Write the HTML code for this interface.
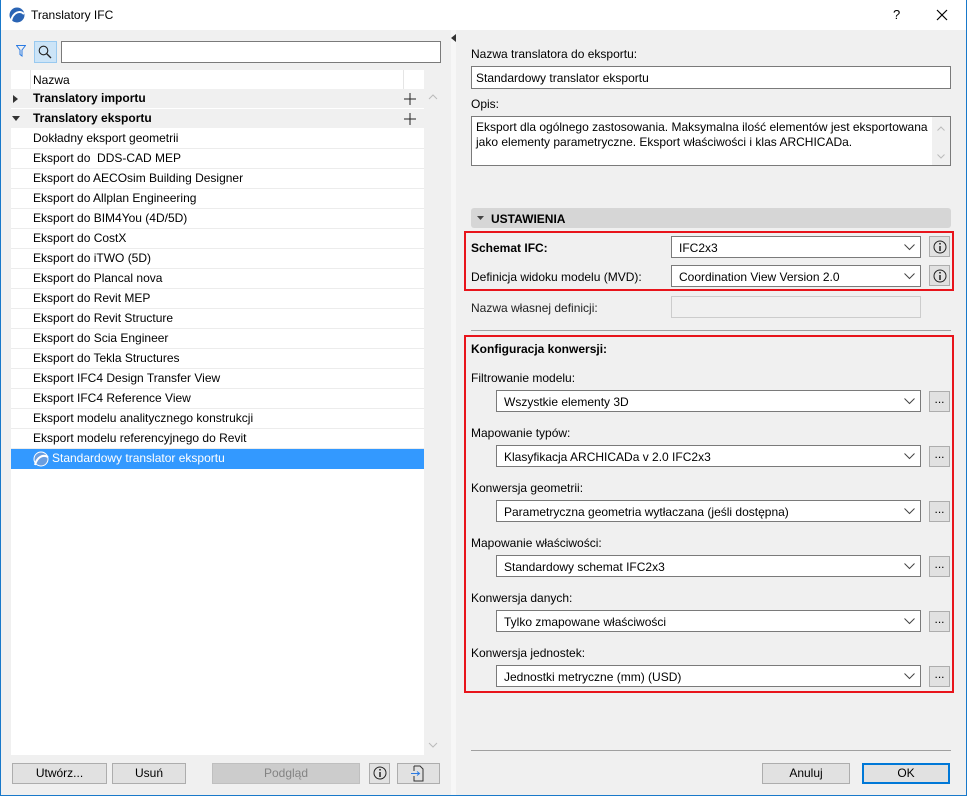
<!DOCTYPE html>
<html><head><meta charset="utf-8"><style>
*{box-sizing:border-box;margin:0;padding:0}
body{width:967px;height:796px;overflow:hidden;background:#f0f0f0;font-family:"Liberation Sans",sans-serif;font-size:12px;color:#000;position:relative}
.a{position:absolute}
.win{position:absolute;left:0;top:0;width:967px;height:796px;border:1px solid #1979ca;border-top:none}
.title{left:1px;top:0;width:965px;height:30px;background:#fff}
.inp{position:absolute;background:#fff;border:1px solid #7a7a7a}
.dd{position:absolute;background:#fff;border:1px solid #7a7a7a;height:22px;padding:4px 0 0 7px;white-space:nowrap}
.dd svg{position:absolute;right:5px;top:7px}
.btn{position:absolute;background:#e1e1e1;border:1px solid #adadad;height:21px;text-align:center;line-height:19px}
.row{position:absolute;left:11px;width:413px;height:20px;line-height:19px;padding-left:22px;border-bottom:1px solid #ececec;background:#fff;white-space:nowrap}
.lbl{position:absolute;white-space:nowrap}
.info{position:absolute;width:21px;height:21px;background:#e1e1e1;border:1px solid #adadad}
.red{position:absolute;border:2px solid #e8141b}
</style></head><body>
<div class="a title"></div>
<svg class="a" style="left:9px;top:7px" width="16" height="16" viewBox="0 0 16 16"><circle cx="8" cy="8" r="7.5" fill="#2a64b4"/><path d="M2 14 C4 5 11 3 15 7" stroke="#fff" stroke-width="2" fill="none"/></svg>
<div class="lbl" style="left:31px;top:8px;font-size:12px">Translatory IFC</div>
<div class="lbl" style="left:893px;top:7px;font-size:13px">?</div>
<svg class="a" style="left:936px;top:9px" width="12" height="12"><path d="M1 1L11 11M11 1L1 11" stroke="#000" stroke-width="1.2"/></svg>

<!-- left pane -->
<svg class="a" style="left:16px;top:45px" width="10" height="12"><path d="M0.5 0.5H9.5L6 5V11L4 9.5V5Z" fill="none" stroke="#2a7ae2"/></svg>
<div class="a" style="left:34px;top:41px;width:23px;height:22px;background:#cce4f7;border:1px solid #99c9ef"></div>
<svg class="a" style="left:38px;top:45px" width="14" height="14"><circle cx="5.5" cy="5.5" r="4.3" fill="none" stroke="#222" stroke-width="1.1"/><path d="M8.5 8.5L13 13" stroke="#222" stroke-width="1.3"/></svg>
<div class="inp" style="left:61px;top:41px;width:380px;height:22px"></div>
<div class="a" style="left:11px;top:70px;width:413px;height:19px;background:#fff"></div>
<div class="a" style="left:30px;top:70px;width:1px;height:19px;background:#e5e5e5"></div>
<div class="a" style="left:403px;top:70px;width:1px;height:19px;background:#e5e5e5"></div>
<div class="lbl" style="left:33px;top:73px">Nazwa</div>
<div class="row" style="top:89px;background:#f0f0f0;font-weight:bold;border-color:#fff">Translatory importu</div>
<svg class="a" style="left:13px;top:95px" width="6" height="8"><path d="M0 0L5 4L0 8Z" fill="#333"/></svg>
<svg class="a" style="left:404px;top:93px" width="12" height="12"><path d="M6 0V12M0 6H12" stroke="#222"/></svg>
<div class="row" style="top:109px;background:#f0f0f0;font-weight:bold;border-color:#fff">Translatory eksportu</div>
<svg class="a" style="left:12px;top:116px" width="8" height="6"><path d="M0 0L8 0L4 5Z" fill="#333"/></svg>
<svg class="a" style="left:404px;top:113px" width="12" height="12"><path d="M6 0V12M0 6H12" stroke="#222"/></svg>
<div class="row" style="top:129px">Dokładny eksport geometrii</div>
<div class="row" style="top:149px">Eksport do&nbsp; DDS-CAD MEP</div>
<div class="row" style="top:169px">Eksport do AECOsim Building Designer</div>
<div class="row" style="top:189px">Eksport do Allplan Engineering</div>
<div class="row" style="top:209px">Eksport do BIM4You (4D/5D)</div>
<div class="row" style="top:229px">Eksport do CostX</div>
<div class="row" style="top:249px">Eksport do iTWO (5D)</div>
<div class="row" style="top:269px">Eksport do Plancal nova</div>
<div class="row" style="top:289px">Eksport do Revit MEP</div>
<div class="row" style="top:309px">Eksport do Revit Structure</div>
<div class="row" style="top:329px">Eksport do Scia Engineer</div>
<div class="row" style="top:349px">Eksport do Tekla Structures</div>
<div class="row" style="top:369px">Eksport IFC4 Design Transfer View</div>
<div class="row" style="top:389px">Eksport IFC4 Reference View</div>
<div class="row" style="top:409px">Eksport modelu analitycznego konstrukcji</div>
<div class="row" style="top:429px">Eksport modelu referencyjnego do Revit</div>
<div class="row" style="top:449px;background:#3399ff;color:#fff;padding-left:41px;border:none">Standardowy translator eksportu</div>
<svg class="a" style="left:33px;top:451px" width="16" height="16"><circle cx="8" cy="8" r="7" fill="#6a9ee0" stroke="#fff"/><path d="M2 14C4 6 10 3 15 6" stroke="#fff" stroke-width="2" fill="none"/></svg>
<div class="a" style="left:11px;top:469px;width:413px;height:286px;background:#fff"></div>
<svg class="a" style="left:428px;top:94px" width="10" height="6"><path d="M1 5L5 1L9 5" stroke="#bbb" fill="none"/></svg>
<svg class="a" style="left:428px;top:742px" width="10" height="6"><path d="M1 1L5 5L9 1" stroke="#bbb" fill="none"/></svg>
<div class="btn" style="left:12px;top:763px;width:95px">Utwórz...</div>
<div class="btn" style="left:112px;top:763px;width:74px">Usuń</div>
<div class="btn" style="left:212px;top:763px;width:148px;background:#cccccc;border-color:#bfbfbf;color:#838383">Podgląd</div>
<div class="btn" style="left:369px;top:763px;width:21px"></div>
<svg class="a" style="left:373px;top:766px" width="14" height="14"><circle cx="7" cy="7" r="6" fill="none" stroke="#222"/><path d="M7 6V11" stroke="#222" stroke-width="1.5"/><circle cx="7" cy="3.8" r="0.9" fill="#222"/></svg>
<div class="btn" style="left:397px;top:763px;width:43px"></div>
<svg class="a" style="left:410px;top:765px" width="16" height="17"><path d="M4 1H10L13 4V16H4V11M4 6V1" fill="none" stroke="#333"/><path d="M1 8.5H9M7 6.5L9.5 8.5L7 10.5" stroke="#2a7ae2" fill="none"/></svg>

<!-- splitter -->
<div class="a" style="left:451px;top:30px;width:5px;height:765px;background:#f7f7f7"></div>
<svg class="a" style="left:451px;top:34px" width="5" height="8"><path d="M5 0V8L0 4Z" fill="#333"/></svg>

<!-- right pane -->
<div class="lbl" style="left:471px;top:47px">Nazwa translatora do eksportu:</div>
<div class="inp" style="left:471px;top:66px;width:480px;height:23px;padding:4px 0 0 4px">Standardowy translator eksportu</div>
<div class="lbl" style="left:471px;top:97px">Opis:</div>
<div class="inp" style="left:471px;top:116px;width:480px;height:50px;padding:3px 22px 0 4px;line-height:15px">Eksport dla ogólnego zastosowania. Maksymalna ilość elementów jest eksportowana jako elementy parametryczne. Eksport właściwości i klas ARCHICADa.</div>
<div class="a" style="left:932px;top:117px;width:18px;height:48px;background:#f0f0f0"></div>
<svg class="a" style="left:937px;top:126px" width="8" height="5"><path d="M0.5 4.5L4 1L7.5 4.5" stroke="#bbb" fill="none"/></svg>
<svg class="a" style="left:937px;top:154px" width="8" height="5"><path d="M0.5 0.5L4 4L7.5 0.5" stroke="#bbb" fill="none"/></svg>

<div class="a" style="left:471px;top:208px;width:480px;height:20px;background:#d6d6d6;border-radius:3px"></div>
<svg class="a" style="left:477px;top:216px" width="7" height="5"><path d="M0 0H7L3.5 4Z" fill="#444"/></svg>
<div class="lbl" style="left:491px;top:212px;font-weight:bold">USTAWIENIA</div>

<div class="red" style="left:464px;top:231px;width:490px;height:60px"></div>
<div class="lbl" style="left:471px;top:241px;font-weight:bold">Schemat IFC:</div>
<div class="dd" style="left:671px;top:236px;width:250px">IFC2x3<svg width="11" height="7"><path d="M0.5 0.5L5.5 5.5L10.5 0.5" stroke="#444" fill="none"/></svg></div>
<div class="info" style="left:929px;top:236px"></div>
<svg class="a" style="left:933px;top:240px" width="14" height="14"><circle cx="7" cy="7" r="6" fill="none" stroke="#222"/><path d="M7 6V11" stroke="#222" stroke-width="1.5"/><circle cx="7" cy="3.8" r="0.9" fill="#222"/></svg>
<div class="lbl" style="left:471px;top:270px">Definicja widoku modelu (MVD):</div>
<div class="dd" style="left:671px;top:265px;width:250px">Coordination View Version 2.0<svg width="11" height="7"><path d="M0.5 0.5L5.5 5.5L10.5 0.5" stroke="#444" fill="none"/></svg></div>
<div class="info" style="left:929px;top:265px"></div>
<svg class="a" style="left:933px;top:269px" width="14" height="14"><circle cx="7" cy="7" r="6" fill="none" stroke="#222"/><path d="M7 6V11" stroke="#222" stroke-width="1.5"/><circle cx="7" cy="3.8" r="0.9" fill="#222"/></svg>
<div class="lbl" style="left:471px;top:301px;color:#222">Nazwa własnej definicji:</div>
<div class="a" style="left:671px;top:296px;width:250px;height:22px;background:#f0f0f0;border:1px solid #ccc"></div>
<div class="a" style="left:471px;top:330px;width:480px;height:1px;background:#a0a0a0"></div>

<div class="red" style="left:464px;top:335px;width:490px;height:358px"></div>
<div class="lbl" style="left:471px;top:342px;font-weight:bold">Konfiguracja konwersji:</div>

<div class="lbl" style="left:471px;top:371px">Filtrowanie modelu:</div>
<div class="dd" style="left:496px;top:390px;width:425px">Wszystkie elementy 3D<svg width="11" height="7"><path d="M0.5 0.5L5.5 5.5L10.5 0.5" stroke="#444" fill="none"/></svg></div>
<div class="btn" style="left:929px;top:391px;width:21px;height:21px;line-height:15px">...</div>

<div class="lbl" style="left:471px;top:426px">Mapowanie typów:</div>
<div class="dd" style="left:496px;top:445px;width:425px">Klasyfikacja ARCHICADa v 2.0 IFC2x3<svg width="11" height="7"><path d="M0.5 0.5L5.5 5.5L10.5 0.5" stroke="#444" fill="none"/></svg></div>
<div class="btn" style="left:929px;top:446px;width:21px;height:21px;line-height:15px">...</div>

<div class="lbl" style="left:471px;top:481px">Konwersja geometrii:</div>
<div class="dd" style="left:496px;top:500px;width:425px">Parametryczna geometria wytłaczana (jeśli dostępna)<svg width="11" height="7"><path d="M0.5 0.5L5.5 5.5L10.5 0.5" stroke="#444" fill="none"/></svg></div>
<div class="btn" style="left:929px;top:501px;width:21px;height:21px;line-height:15px">...</div>

<div class="lbl" style="left:471px;top:536px">Mapowanie właściwości:</div>
<div class="dd" style="left:496px;top:555px;width:425px">Standardowy schemat IFC2x3<svg width="11" height="7"><path d="M0.5 0.5L5.5 5.5L10.5 0.5" stroke="#444" fill="none"/></svg></div>
<div class="btn" style="left:929px;top:556px;width:21px;height:21px;line-height:15px">...</div>

<div class="lbl" style="left:471px;top:591px">Konwersja danych:</div>
<div class="dd" style="left:496px;top:610px;width:425px">Tylko zmapowane właściwości<svg width="11" height="7"><path d="M0.5 0.5L5.5 5.5L10.5 0.5" stroke="#444" fill="none"/></svg></div>
<div class="btn" style="left:929px;top:611px;width:21px;height:21px;line-height:15px">...</div>

<div class="lbl" style="left:471px;top:646px">Konwersja jednostek:</div>
<div class="dd" style="left:496px;top:665px;width:425px">Jednostki metryczne (mm) (USD)<svg width="11" height="7"><path d="M0.5 0.5L5.5 5.5L10.5 0.5" stroke="#444" fill="none"/></svg></div>
<div class="btn" style="left:929px;top:666px;width:21px;height:21px;line-height:15px">...</div>

<div class="a" style="left:471px;top:750px;width:480px;height:1px;background:#a0a0a0"></div>
<div class="btn" style="left:762px;top:763px;width:88px">Anuluj</div>
<div class="btn" style="left:862px;top:763px;width:88px;border:2px solid #0078d7;line-height:17px">OK</div>
<div class="win"></div>
</body></html>
